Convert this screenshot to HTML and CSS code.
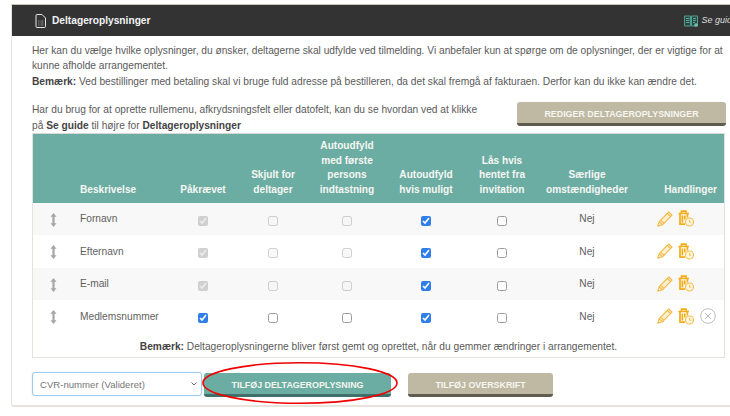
FILE: index.html
```html
<!DOCTYPE html>
<html lang="da">
<head>
<meta charset="utf-8">
<title>Deltageroplysninger</title>
<link rel="stylesheet" href="styles.css">
</head>
<body>
<svg width="0" height="0" class="defs">
  <defs>
    <symbol id="handle" viewBox="0 0 7 14">
      <path d="M3.500 0 6.500 3.800H4.600V10.200H6.500L3.500 14 .5 10.200H2.400V3.800H.5Z" fill="#a6a6a6"/>
    </symbol>
    <symbol id="pencil" viewBox="0 0 16 16">
      <path d="M.8 15.200 2.200 10.600 11.800 1 15 4.200 5.400 13.800Z M2.200 10.600 5.400 13.800 M10.400 2.400 13.600 5.600 M3.600 9.200 6.800 12.400" fill="#fdf0d0" stroke="#f2b845" stroke-width="1.100" stroke-linejoin="round"/>
    </symbol>
    <symbol id="trash" viewBox="0 0 16 17">
      <path d="M.5 3.500H11M3.500 3.500V1.200H8V3.500M2 3.500V14.200H7M4.400 5.500V12.500M6.800 5.500V9.500M9.400 3.500V7.500" fill="none" stroke="#f4ad14" stroke-width="1.700"/>
      <circle cx="11.500" cy="12" r="4" fill="#fff6e0" stroke="#f5bd4e" stroke-width="1.100"/>
      <path d="M11.500 9.800V12.200H13.400" fill="none" stroke="#f5bd4e" stroke-width=".9"/>
    </symbol>
    <symbol id="remove" viewBox="0 0 16 16">
      <circle cx="8" cy="8" r="7.300" fill="none" stroke="#bdbdbd" stroke-width="1"/>
      <path d="M5.200 5.200 10.800 10.800M10.800 5.200 5.200 10.800" stroke="#b5b5b5" stroke-width="1"/>
    </symbol>
  </defs>
</svg>
<main class="card">
  <header class="card-head">
    <div class="head-title">
      <svg class="doc-icon" width="11" height="14" viewBox="0 0 11 14">
        <path d="M1 1.500A1 1 0 0 1 2 .5H7L10.500 4V12.500A1 1 0 0 1 9.500 13.500H2A1 1 0 0 1 1 12.500Z" fill="none" stroke="#e6e6e6" stroke-width="1"/>
        <path d="M3 7H4.500M3 9H4.500M3 11H4.500M5.500 7H8.500M5.500 9H8.500M5.500 11H8.500" stroke="#9a9a9a" stroke-width=".8"/>
      </svg>
      <span>Deltageroplysninger</span>
    </div>
    <a class="guide">
      <svg width="14" height="12" viewBox="0 0 14 12">
        <path d="M.5 1H6.500V11H.5ZM7.500 1H13.500V11H7.500Z" fill="#2e4a44" stroke="#4f9c8d" stroke-width="1"/>
        <path d="M2 3.500H5.500M2 5.500H5.500M2 7.500H5.500M9 3.500H12M9 5.500H12M9 7.500H11" stroke="#58a898" stroke-width="1"/>
        <circle cx="12" cy="10" r="1.800" fill="#6cc2b0"/>
      </svg>
      <em>Se guide</em>
    </a>
  </header>
  <div class="card-body">
    <p class="intro">Her kan du vælge hvilke oplysninger, du ønsker, deltagerne skal udfylde ved tilmelding. Vi anbefaler kun at spørge om de oplysninger, der er vigtige for at kunne afholde arrangementet.<br><strong>Bemærk:</strong> Ved bestillinger med betaling skal vi bruge fuld adresse på bestilleren, da det skal fremgå af fakturaen. Derfor kan du ikke kan ændre det.</p>
    <div class="tool-row">
      <p>Har du brug for at oprette rullemenu, afkrydsningsfelt eller datofelt, kan du se hvordan ved at klikke på <strong>Se guide</strong> til højre for <strong>Deltageroplysninger</strong></p>
      <button class="btn btn-beige btn-edit">REDIGER DELTAGEROPLYSNINGER</button>
    </div>
    <div class="table-box">
      <table>
        <colgroup>
          <col class="c-handle"><col class="c-name"><col class="c-req"><col class="c-hide"><col class="c-first"><col class="c-auto"><col class="c-lock"><col class="c-spec"><col class="c-act">
        </colgroup>
        <thead>
          <tr>
            <th></th>
            <th class="left">Beskrivelse</th>
            <th>Påkrævet</th>
            <th>Skjult for deltager</th>
            <th>Autoudfyld med første persons indtastning</th>
            <th>Autoudfyld hvis muligt</th>
            <th>Lås hvis hentet fra invitation</th>
            <th>Særlige omstændigheder</th>
            <th class="right">Handlinger</th>
          </tr>
        </thead>
        <tbody>
          <tr>
            <td><svg class="ic-handle"><use href="#handle"/></svg></td>
            <td class="left">Fornavn</td>
            <td><input type="checkbox" checked disabled></td>
            <td><input type="checkbox" disabled></td>
            <td><input type="checkbox" disabled></td>
            <td><input type="checkbox" checked></td>
            <td><input type="checkbox"></td>
            <td>Nej</td>
            <td class="acts"><svg class="ic-pencil"><use href="#pencil"/></svg><svg class="ic-trash"><use href="#trash"/></svg></td>
          </tr>
          <tr>
            <td><svg class="ic-handle"><use href="#handle"/></svg></td>
            <td class="left">Efternavn</td>
            <td><input type="checkbox" checked disabled></td>
            <td><input type="checkbox" disabled></td>
            <td><input type="checkbox" disabled></td>
            <td><input type="checkbox" checked></td>
            <td><input type="checkbox"></td>
            <td>Nej</td>
            <td class="acts"><svg class="ic-pencil"><use href="#pencil"/></svg><svg class="ic-trash"><use href="#trash"/></svg></td>
          </tr>
          <tr>
            <td><svg class="ic-handle"><use href="#handle"/></svg></td>
            <td class="left">E-mail</td>
            <td><input type="checkbox" checked disabled></td>
            <td><input type="checkbox" disabled></td>
            <td><input type="checkbox" disabled></td>
            <td><input type="checkbox" checked></td>
            <td><input type="checkbox"></td>
            <td>Nej</td>
            <td class="acts"><svg class="ic-pencil"><use href="#pencil"/></svg><svg class="ic-trash"><use href="#trash"/></svg></td>
          </tr>
          <tr>
            <td><svg class="ic-handle"><use href="#handle"/></svg></td>
            <td class="left">Medlemsnummer</td>
            <td><input type="checkbox" checked></td>
            <td><input type="checkbox"></td>
            <td><input type="checkbox"></td>
            <td><input type="checkbox" checked></td>
            <td><input type="checkbox"></td>
            <td>Nej</td>
            <td class="acts"><svg class="ic-pencil"><use href="#pencil"/></svg><svg class="ic-trash"><use href="#trash"/></svg><svg class="ic-remove"><use href="#remove"/></svg></td>
          </tr>
        </tbody>
      </table>
      <p class="note"><strong>Bemærk:</strong> Deltageroplysningerne bliver først gemt og oprettet, når du gemmer ændringer i arrangementet.</p>
    </div>
    <div class="add-row">
      <select class="field-select"><option>CVR-nummer (Valideret)</option></select>
      <div class="add-wrap">
        <button class="btn btn-teal">TILFØJ DELTAGEROPLYSNING</button>
        <svg class="highlight" width="200" height="46" viewBox="0 0 200 46">
          <ellipse cx="100" cy="23" rx="97" ry="20.300" fill="none" stroke="#f00000" stroke-width="1.600"/>
        </svg>
      </div>
      <button class="btn btn-beige btn-heading">TILFØJ OVERSKRIFT</button>
    </div>
  </div>
</main>
</body>
</html>
```
FILE: styles.css
```css
* { box-sizing: border-box; }
html, body { margin: 0; padding: 0; height: 416px; overflow: hidden; background: #fff; }
body { width: 730px; font-family: "Liberation Sans", Arial, sans-serif; font-size: 10.200px; line-height: 15.400px; color: #5a5a5a; }
.defs { position: absolute; }
p { margin: 0; }
strong { color: #444; }

.card { width: 760px; height: 403px; margin: 4px 0 0 11px; background: #fff; border: 1px solid #e6e4dd; border-width: 0 2px 2px 1px; border-radius: 0 0 3px 3px; border-top: 1px solid #c9c5b4; }
.card-head { height: 31px; background: #333334; color: #fff; display: flex; align-items: center; justify-content: space-between; padding: 0 20px 0 23px; width: 758px; }
.head-title { display: flex; align-items: center; gap: 6px; font-weight: bold; font-size: 10.200px; color: #f4f4f4; }
.guide { display: flex; align-items: center; gap: 3px; font-size: 9px; color: #ddd; margin-left: auto; position: relative; left: -13px; }

.card-body { padding: 7px 0 0 20px; width: 714px; }
.intro { width: 694px; }
.tool-row { display: flex; justify-content: space-between; align-items: flex-start; margin-top: 13px; height: 32px; }
.tool-row p { width: 455px; }
.btn { font-family: inherit; font-weight: bold; font-size: 8.900px; color: #f6f5ef; border: 0; border-radius: 3px; height: 24px; padding: 2px 0 0; cursor: pointer; display: block; }
.btn-beige { background: #bfb9a3; border-bottom: 3px solid #5f5b4e; }
.btn-teal { background: #6badA3; border-bottom: 3px solid #41706c; width: 187px; }
.btn-edit { width: 209px; }
.btn-heading { width: 145px; margin-top: 1px; }

.table-box { width: 693px; border: 1px solid #e3e2dc; border-top: 0; margin-top: -1px; height: 225px; }
table { width: 100%; border-collapse: collapse; table-layout: fixed; }
.c-handle { width: 40px; } .c-name { width: 95px; } .c-req { width: 70px; } .c-hide { width: 70px; }
.c-first { width: 78px; } .c-auto { width: 80px; } .c-lock { width: 72px; } .c-spec { width: 98px; } .c-act { width: 88px; }
thead tr { background: #6badA3; height: 69px; border-top: 1px solid #d8d8d4; }
th { color: #f6f6f2; font-size: 10.100px; line-height: 14.700px; font-weight: bold; vertical-align: bottom; padding: 0 2px 5px; text-align: center; }
th.left, td.left { text-align: left; padding-left: 7px; }
th.right { text-align: right; padding-right: 7px; }
td { height: 32.500px; text-align: center; padding: 0; vertical-align: middle; font-size: 10.200px; color: #5f5f5f; }
tbody tr:nth-child(odd) { background: #f8f8f8; }
input[type=checkbox] { width: 10px; height: 10px; margin: 2px 0 0; accent-color: #2f7fe8; vertical-align: middle; }
input[type=checkbox]:not(:checked):not(:disabled) { opacity: .72; }
.acts { text-align: left; padding-left: 21px; white-space: nowrap; font-size: 0; }
.acts svg { vertical-align: middle; }
.ic-handle { width: 7px; height: 14px; vertical-align: middle; }
.ic-pencil { width: 16px; height: 16px; margin-right: 5px; }
.ic-trash { width: 16px; height: 17px; margin-right: 6px; }
.ic-remove { width: 16px; height: 16px; }
.note { text-align: center; padding-top: 6px; width: 100%; }

.add-row { display: flex; align-items: flex-start; margin-top: 14px; }
.field-select { appearance: none; width: 170px; height: 24px; margin-right: 2px; border: 1px solid #9fcbf1; border-radius: 3px; box-shadow: 0 0 2px #cfe6fa; color: #777; font-family: inherit; font-size: 9.600px; padding: 0 7px; background: #fff url("data:image/svg+xml,%3Csvg xmlns='http://www.w3.org/2000/svg' width='6' height='4'%3E%3Cpath d='M.5.5 3 3 5.500.5' fill='none' stroke='%23666'/%3E%3C/svg%3E") no-repeat right 4px center; }
.add-wrap { position: relative; margin-right: 17px; margin-top: 1px; }
.highlight { position: absolute; left: -4px; top: -13px; pointer-events: none; }
```
